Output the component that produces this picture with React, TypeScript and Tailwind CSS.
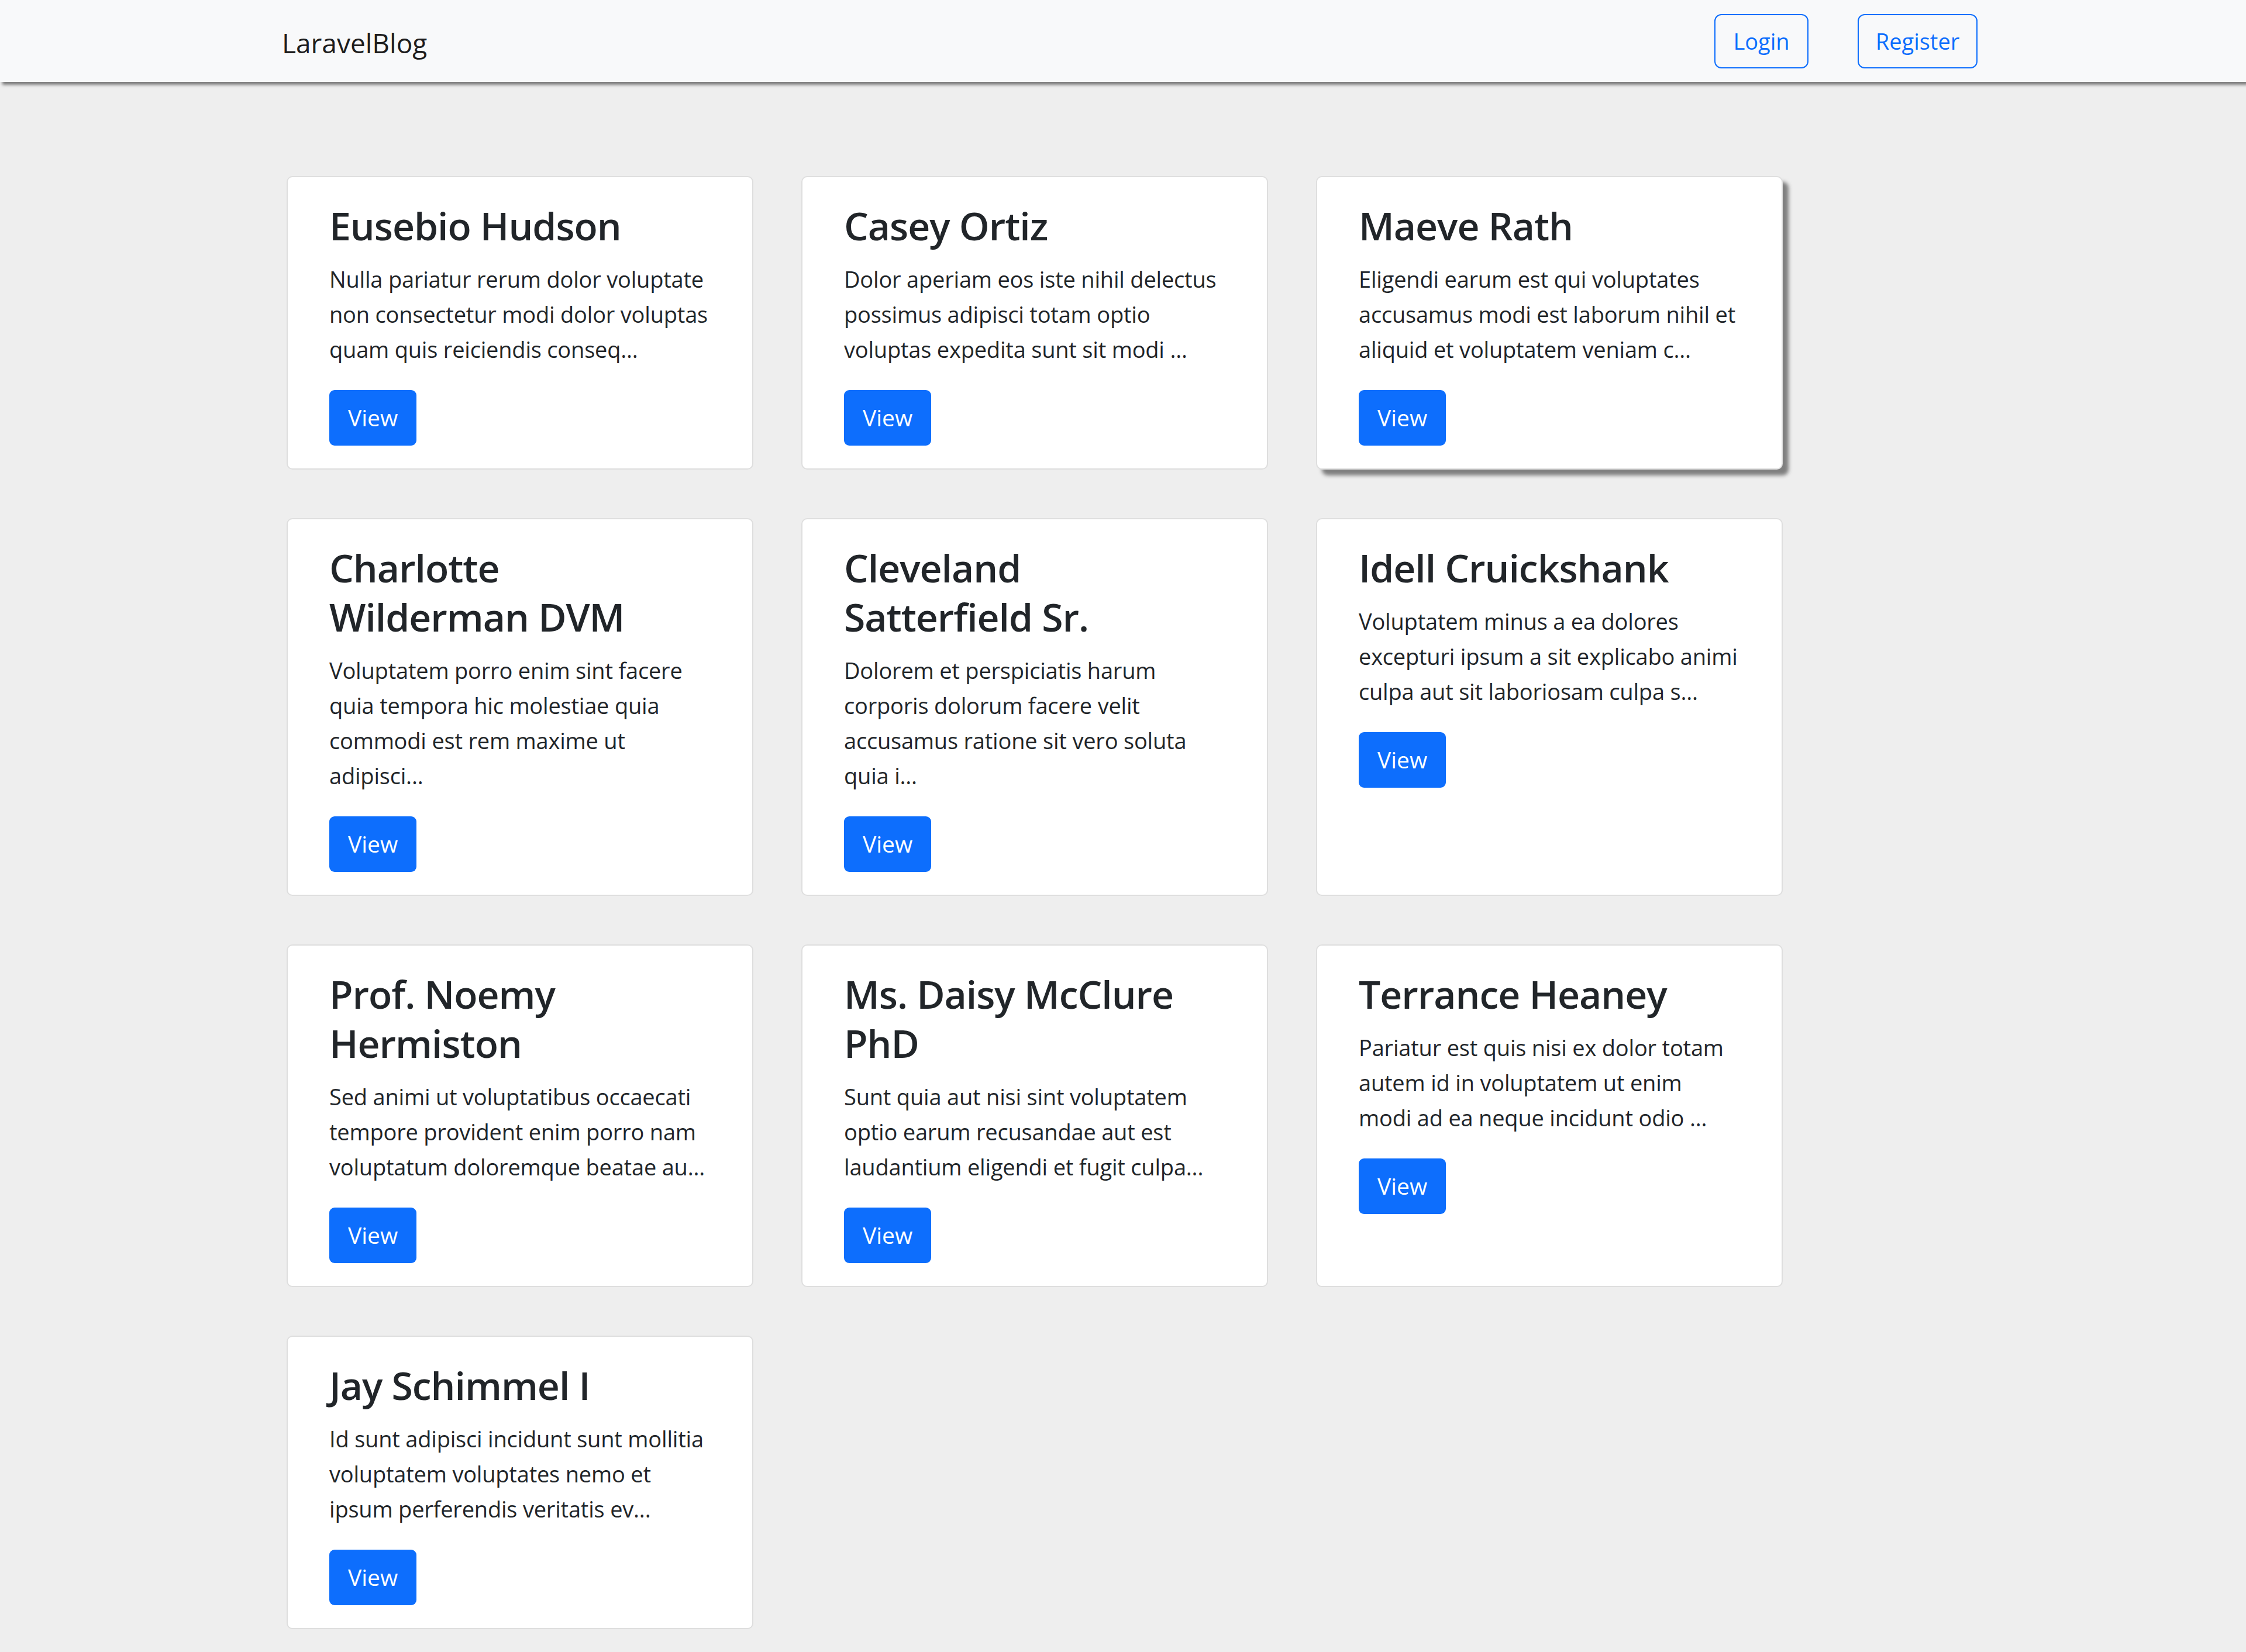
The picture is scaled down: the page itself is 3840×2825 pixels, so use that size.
import React from 'react';

interface Post {
  title: string[];
  lines: string[];
  hovered?: boolean;
}

const posts: Post[] = [
  {
    title: ['Eusebio Hudson'],
    lines: ['Nulla pariatur rerum dolor voluptate', 'non consectetur modi dolor voluptas', 'quam quis reiciendis conseq...'],
  },
  {
    title: ['Casey Ortiz'],
    lines: ['Dolor aperiam eos iste nihil delectus', 'possimus adipisci totam optio', 'voluptas expedita sunt sit modi ...'],
  },
  {
    title: ['Maeve Rath'],
    lines: ['Eligendi earum est qui voluptates', 'accusamus modi est laborum nihil et', 'aliquid et voluptatem veniam c...'],
    hovered: true,
  },
  {
    title: ['Charlotte', 'Wilderman DVM'],
    lines: ['Voluptatem porro enim sint facere', 'quia tempora hic molestiae quia', 'commodi est rem maxime ut', 'adipisci...'],
  },
  {
    title: ['Cleveland', 'Satterfield Sr.'],
    lines: ['Dolorem et perspiciatis harum', 'corporis dolorum facere velit', 'accusamus ratione sit vero soluta', 'quia i...'],
  },
  {
    title: ['Idell Cruickshank'],
    lines: ['Voluptatem minus a ea dolores', 'excepturi ipsum a sit explicabo animi', 'culpa aut sit laboriosam culpa s...'],
  },
  {
    title: ['Prof. Noemy', 'Hermiston'],
    lines: ['Sed animi ut voluptatibus occaecati', 'tempore provident enim porro nam', 'voluptatum doloremque beatae au...'],
  },
  {
    title: ['Ms. Daisy McClure', 'PhD'],
    lines: ['Sunt quia aut nisi sint voluptatem', 'optio earum recusandae aut est', 'laudantium eligendi et fugit culpa...'],
  },
  {
    title: ['Terrance Heaney'],
    lines: ['Pariatur est quis nisi ex dolor totam', 'autem id in voluptatem ut enim', 'modi ad ea neque incidunt odio ...'],
  },
  {
    title: ['Jay Schimmel I'],
    lines: ['Id sunt adipisci incidunt sunt mollitia', 'voluptatem voluptates nemo et', 'ipsum perferendis veritatis ev...'],
  },
];

const PostCard: React.FC<{ post: Post }> = ({ post }) => (
  <div
    className={`flex flex-col rounded-[10px] border-2 border-[#dedede] bg-white pt-[40px] pb-[39px] px-[71px] ${
      post.hovered ? 'shadow-[10px_10px_6px_#7f7f7f]' : ''
    }`}
  >
    <h3 className="mb-[20px] text-[66px] leading-[84px] font-semibold tracking-[-1px] text-[#212529] whitespace-nowrap">
      {post.title.map((t, i) => (
        <React.Fragment key={t}>
          {i > 0 && <br />}
          {t}
        </React.Fragment>
      ))}
    </h3>
    <p className="mb-[40px] text-[38px] leading-[60px] tracking-[-0.2px] text-[#212529]">
      {post.lines.map((l) => (
        <span key={l} className="block whitespace-nowrap">{l}</span>
      ))}
    </p>
    <div>
      <button className="flex items-center justify-center w-[149px] h-[95px] rounded-[9px] bg-[#0d6efd] text-white text-[39px]">
        View
      </button>
    </div>
  </div>
);

export default function App() {
  return (
    <div className="min-h-screen bg-[#eeeeee] font-['Open_Sans',sans-serif] pb-[43px]">
      {/* Navbar */}
      <nav className="relative z-10 h-[140px] bg-[#f8f9fa] shadow-[4px_5px_5px_#7a7a7a]">
        <div className="flex h-full items-center justify-between pl-[482px] pr-[459px]">
          <a className="text-[46px] leading-none text-[#1d1d1d] pt-[6px]">LaravelBlog</a>
          <div className="flex items-center gap-[84px]">
            <button className="flex items-center justify-center w-[161px] h-[93px] rounded-[12px] border-2 border-[#0d6efd] text-[38px] text-[#0d6efd]">
              Login
            </button>
            <button className="flex items-center justify-center w-[205px] h-[93px] rounded-[12px] border-2 border-[#0d6efd] text-[38px] text-[#0d6efd]">
              Register
            </button>
          </div>
        </div>
      </nav>

      {/* Posts */}
      <main className="pl-[490px] pt-[161px]">
        <div className="grid grid-cols-[repeat(3,798px)] gap-x-[82px] gap-y-[83px]">
          {posts.map((p) => (
            <PostCard key={p.title.join(' ')} post={p} />
          ))}
        </div>
      </main>
    </div>
  );
}
